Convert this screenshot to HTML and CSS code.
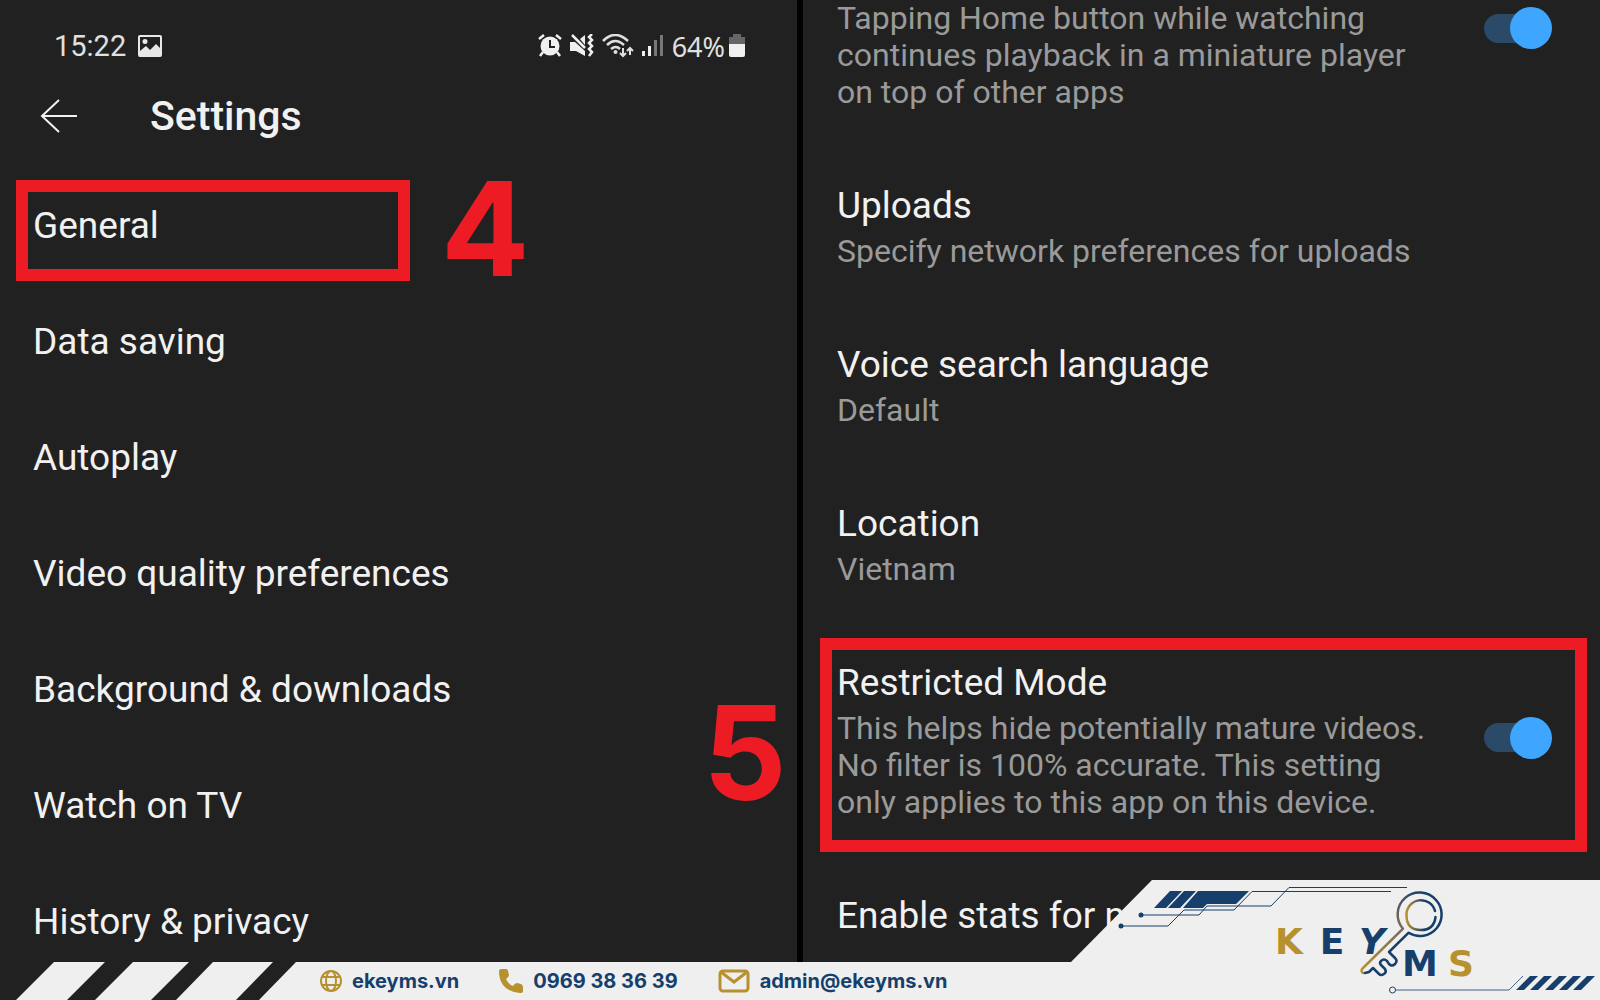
FILE: index.html
```
<!DOCTYPE html>
<html lang="en">
<head>
    <meta charset="UTF-8">
    <meta name="viewport" content="width=device-width, initial-scale=1.0">
    <title>Settings</title>
    <link rel="stylesheet" href="styles.css">
</head>
<body>
    <main class="screens">
        <!-- Settings menu -->
        <section class="screen">
            <div class="status-bar">
                <span class="time">15:22</span>
                <svg class="picture-icon" width="24" height="22" viewBox="0 0 24 22">
                    <path fill="#e8e8e8" fill-rule="evenodd" d="M2 0h20q2 0 2 2v18q0 2-2 2H2q-2 0-2-2V2q0-2 2-2zM2 2v14l6-5 4 4 6-6 4 4V2zM7 4a2.500 2.500 0 1 1 0 5a2.500 2.500 0 0 1 0-5z"/>
                </svg>
                <div class="status-icons">
                    <!-- alarm -->
                    <svg width="24" height="24" viewBox="0 0 24 24" fill="none" stroke="#f0f0f0">
                        <circle cx="12" cy="12" r="9.500" fill="#f0f0f0" stroke="none"/>
                        <path stroke-width="2.500" d="M1 5l5-4M23 5l-5-4M5 18l-3 4M19 18l3 4"/>
                        <path stroke="#212121" stroke-width="2" d="M12 6v7h5"/>
                    </svg>
                    <!-- muted, vibrate -->
                    <svg width="24" height="24" viewBox="0 0 24 24" fill="none" stroke="#f0f0f0">
                        <path fill="#f0f0f0" stroke="none" d="M0 8h5L15 17v5L6 17H0zM10 5l5-4v10z"/>
                        <path stroke-width="2.500" d="M2 1l13 13M22 0l-3 3 3 3-3 3 3 3-3 3 3 3-3 4"/>
                    </svg>
                    <!-- wifi -->
                    <svg class="wifi" width="32" height="24" viewBox="0 0 32 24" fill="none" stroke="#e0e0e0" stroke-width="2.500">
                        <path d="M1 7q12-12 25 0M5 11q8-8 17 0M9 15q5-4 9 0"/>
                        <circle cx="13.500" cy="18" r="2" fill="#e0e0e0" stroke="none"/>
                        <path stroke-width="2" d="M21 14v8M18 19l3 3 3-3M28 21v-7M25 17l3-3 3 3"/>
                    </svg>
                    <!-- signal -->
                    <svg width="22" height="24" viewBox="0 0 22 24">
                        <path fill="#f0f0f0" d="M0 17h3v5H0zM6 12h3v10H6z"/>
                        <path fill="#777" d="M12 6h3v16h-3zM18 1h3v21h-3z"/>
                    </svg>
                    <span class="battery-level">64%</span>
                    <svg class="battery" width="16" height="24" viewBox="0 0 16 24">
                        <path fill="#666" d="M4 0h8v3h4v8H0V3h4z"/>
                        <path fill="#f0f0f0" d="M0 10h16v11q0 2-2 2H2q-2 0-2-2z"/>
                    </svg>
                </div>
            </div>

            <header class="screen-header">
                <button class="back" aria-label="Back">
                    <svg width="38" height="34" viewBox="0 0 38 34" fill="none" stroke="#f1f1f1" stroke-width="2">
                        <path d="M19 1L2 17l17 16M2 17h35"/>
                    </svg>
                </button>
                <h1>Settings</h1>
            </header>

            <nav class="menu">
                <a href="#" class="menu-item general">General<span class="step step-4">4</span></a>
                <a href="#" class="menu-item">Data saving</a>
                <a href="#" class="menu-item">Autoplay</a>
                <a href="#" class="menu-item">Video quality preferences</a>
                <a href="#" class="menu-item">Background &amp; downloads</a>
                <a href="#" class="menu-item">Watch on TV</a>
                <a href="#" class="menu-item">History &amp; privacy</a>
            </nav>
        </section>

        <!-- General settings -->
        <section class="screen options">
            <div class="option first">
                <label class="option-text" for="pip">
                    <span class="summary">Tapping Home button while watching continues playback in a miniature player on top of other apps</span>
                </label>
                <input class="toggle" type="checkbox" id="pip" checked>
            </div>
            <div class="option">
                <div class="option-text">
                    <h2>Uploads</h2>
                    <span class="summary">Specify network preferences for uploads</span>
                </div>
            </div>
            <div class="option">
                <div class="option-text">
                    <h2>Voice search language</h2>
                    <span class="summary">Default</span>
                </div>
            </div>
            <div class="option">
                <div class="option-text">
                    <h2>Location</h2>
                    <span class="summary">Vietnam</span>
                </div>
            </div>
            <div class="option restricted">
                <span class="step step-5">5</span>
                <label class="option-text" for="restricted">
                    <span class="title">Restricted Mode</span>
                    <span class="summary">This helps hide potentially mature videos. No filter is 100% accurate. This setting only applies to this app on this device.</span>
                </label>
                <input class="toggle" type="checkbox" id="restricted" checked>
            </div>
            <div class="option">
                <div class="option-text">
                    <h2>Enable stats for nerds</h2>
                </div>
            </div>
        </section>
    </main>

    <!-- Contact strip -->
    <footer class="footer">
        <svg class="stripes" width="296" height="38" viewBox="0 0 296 38" fill="#efefef">
            <path d="M54 0h51L67 38H16zM133 0h56l-38 38H95zM213 0h60l-37 38h-60zM296 0v38h-37z"/>
        </svg>
        <div class="contacts">
            <a href="#">
                <svg width="22" height="22" viewBox="0 0 22 22" fill="none" stroke="#b8912f" stroke-width="2">
                    <circle cx="11" cy="11" r="10"/>
                    <ellipse cx="11" cy="11" rx="5" ry="10"/>
                    <path d="M2 7h18M2 15h18"/>
                </svg>
                ekeyms.vn
            </a>
            <a href="#">
                <svg width="24" height="24" viewBox="0 0 24 24">
                    <path fill="#b8912f" d="M2 0h5q2 0 2 2l1 4q0 2-3 4 2 5 7 7 2-3 4-3l4 1q2 1 2 3v4q0 2-3 2Q9 23 4 16 0 10 0 3q0-3 2-3z"/>
                </svg>
                0969 38 36 39
            </a>
            <a href="#">
                <svg width="32" height="24" viewBox="0 0 32 24" fill="none" stroke="#b8912f" stroke-width="3">
                    <rect x="2" y="2" width="28" height="20" rx="3"/>
                    <path d="M3 3l13 10L29 3"/>
                </svg>
                admin@ekeyms.vn
            </a>
        </div>
    </footer>

    <!-- Brand corner -->
    <svg class="brand" width="530" height="120" viewBox="1070 880 530 120" role="img" aria-label="KEYMS">
        <defs>
            <linearGradient id="shaft" gradientUnits="userSpaceOnUse" x1="1364" y1="970" x2="1430" y2="900">
                <stop offset="0" stop-color="#b8912f"/>
                <stop offset="0.600" stop-color="#77695a"/>
                <stop offset="1" stop-color="#163f6b"/>
            </linearGradient>
            <linearGradient id="ring" x1="0" y1="0" x2="1" y2="0">
                <stop offset="0" stop-color="#b8912f"/>
                <stop offset="0.600" stop-color="#163f6b"/>
            </linearGradient>
        </defs>
        <path fill="#efefef" d="M1152 880h448v120h-530v-37z"/>
        <g fill="#163f6b">
            <path d="M1170 891h12l-16 17h-12zM1184 891h12l-16 17h-12zM1198 891h51l-13 13h-29l-4 4h-20z"/>
            <circle cx="1141" cy="915" r="2.500"/>
            <circle cx="1121" cy="926" r="2.500"/>
            <path d="M1530 976h8l-14 14h-8zM1544 976h8l-14 14h-8zM1559 976h8l-14 14h-8zM1573 976h8l-14 14h-8zM1587 976h8l-14 14h-8z"/>
        </g>
        <g fill="none" stroke="#163f6b">
            <path d="M1141 915h58l8-9h64l18-18.500h118M1121 926h47l16-16h50l18-18.500h139"/>
            <circle cx="1392.500" cy="990" r="3"/>
            <path stroke-width="0.800" d="M1396 990h113l14-14"/>
        </g>
        <g class="brand-name">
            <text class="gold" x="1289" y="954">K</text>
            <text x="1332" y="954">E</text>
            <text class="slanted" x="1372" y="954">Y</text>
            <text x="1420" y="976">M</text>
            <text class="gold" x="1461" y="976">S</text>
        </g>
        <path fill="#efefef" d="M1403 929l6 4-20 19 6 7-14 15-8-6-10 5-1-5z"/>
        <g fill="none" stroke-width="2.500" stroke-linejoin="round" stroke-linecap="round">
            <path stroke="url(#shaft)" d="M1363 973q-3-2 0-5L1403 928.700A21.500 21.500 0 0 1 1436 900"/>
            <path stroke="#163f6b" d="M1436 900A21.500 21.500 0 0 1 1408.700 932.700L1389 952l6 6q3 3 0 6-3 3-6 0l-2-3q-3-3-6 0-2 2 0 4l4 4q2 3-1 5-3 2-5 0l-6-6-4 4-4 1"/>
            <path stroke="url(#ring)" d="M1435 911a14.500 14.500 0 0 0-28.500 4.500q0 14.500 14.500 14.500 13 0 14.500-13"/>
        </g>
    </svg>
</body>
</html>
```
FILE: styles.css
```
*, *::before, *::after {
    box-sizing: border-box;
}

body {
    margin: 0;
    height: 100vh;
    overflow: hidden;
    position: relative;
    background-color: #000;
    color: #f1f1f1;
    font-family: Roboto, Arial, sans-serif;
}

a {
    color: inherit;
    text-decoration: none;
}

h1, h2 {
    margin: 0;
}

.screens {
    display: grid;
    grid-template-columns: 1fr 1fr;
    gap: 6px;
    height: 100%;
}

.screen {
    background-color: #212121;
    min-width: 0;
}

/* Phone status bar */
.status-bar {
    display: flex;
    align-items: center;
    height: 44px;
    margin-top: 24px;
    padding: 0 52px 0 54px;
    font-size: 29px;
    color: #e0e0e0;
}

.picture-icon {
    margin-left: 12px;
}

.status-icons {
    display: flex;
    align-items: center;
    gap: 8px;
    margin-left: auto;
}

.battery-level {
    font-family: "Noto Sans", sans-serif;
    font-size: 27px;
}

.battery {
    margin-left: -4px;
}

.screen-header {
    display: flex;
    align-items: center;
    gap: 72px;
    height: 64px;
    margin: 16px 0 19px;
    padding-left: 40px;
}

.back {
    display: flex;
    padding: 0;
    border: none;
    background: none;
    cursor: pointer;
}

h1 {
    font-size: 41px;
    font-weight: 500;
}

/* Left menu */
.menu {
    display: flex;
    flex-direction: column;
}

.menu-item {
    position: relative;
    display: flex;
    align-items: center;
    height: 116px;
    padding: 0 33px;
    font-size: 37px;
}

/* Right list of options */
.option {
    position: relative;
    display: flex;
    align-items: center;
    justify-content: space-between;
    margin-bottom: 72px;
    padding: 0 48px 0 34px;
}

.option-text {
    max-width: 600px;
}

h2, .title {
    display: block;
    margin-bottom: 4px;
    font-size: 37px;
    font-weight: 400;
    line-height: 46px;
}

.summary {
    display: block;
    font-size: 32px;
    line-height: 37px;
    color: #9a9a9a;
}

.toggle {
    appearance: none;
    display: flex;
    align-items: center;
    flex: none;
    width: 68px;
    height: 42px;
    margin: 0;
    cursor: pointer;
}

.toggle::before {
    content: "";
    width: 48px;
    height: 29px;
    border-radius: 15px;
    background-color: #2b4a68;
}

.toggle::after {
    content: "";
    width: 42px;
    height: 42px;
    margin-left: -22px;
    border-radius: 50%;
    background-color: #3ea6ff;
}

.first .toggle {
    align-self: flex-start;
    margin-top: 7px;
}

.restricted .toggle {
    margin-bottom: 6px;
}

/* Red frames and step numbers */
.general::after,
.restricted::after {
    content: "";
    position: absolute;
    border: 12px solid #ed1c24;
    pointer-events: none;
}

.general::after {
    top: 13px;
    bottom: 2px;
    left: 16px;
    width: 394px;
}

.restricted::after {
    top: -22px;
    bottom: -31px;
    left: 17px;
    right: 13px;
}

.step {
    position: absolute;
    font-family: Inter, sans-serif;
    font-size: 131px;
    font-weight: 700;
    line-height: 96px;
    color: #ed1c24;
}

.step-4 {
    top: 14px;
    left: 441px;
}

.step-5 {
    top: 45px;
    left: -100px;
}

/* Footer */
.footer {
    position: absolute;
    left: 0;
    right: 0;
    bottom: 0;
    display: flex;
    height: 38px;
    background-color: #212121;
}

.stripes {
    flex: none;
}

.contacts {
    flex: 1;
    display: flex;
    align-items: center;
    gap: 40px;
    padding-left: 24px;
    background-color: #efefef;
}

.contacts a {
    display: flex;
    align-items: center;
    gap: 10px;
    font-family: Inter, sans-serif;
    font-size: 20px;
    font-weight: 700;
    color: #163f6b;
}

.brand {
    position: absolute;
    right: 0;
    bottom: 0;
}

.brand-name {
    font-family: "DejaVu Sans", sans-serif;
    font-size: 36px;
    font-weight: 700;
    text-anchor: middle;
    fill: #163f6b;
}

.brand-name .gold {
    fill: #b8912f;
}

.brand-name .slanted {
    font-style: italic;
}
```
